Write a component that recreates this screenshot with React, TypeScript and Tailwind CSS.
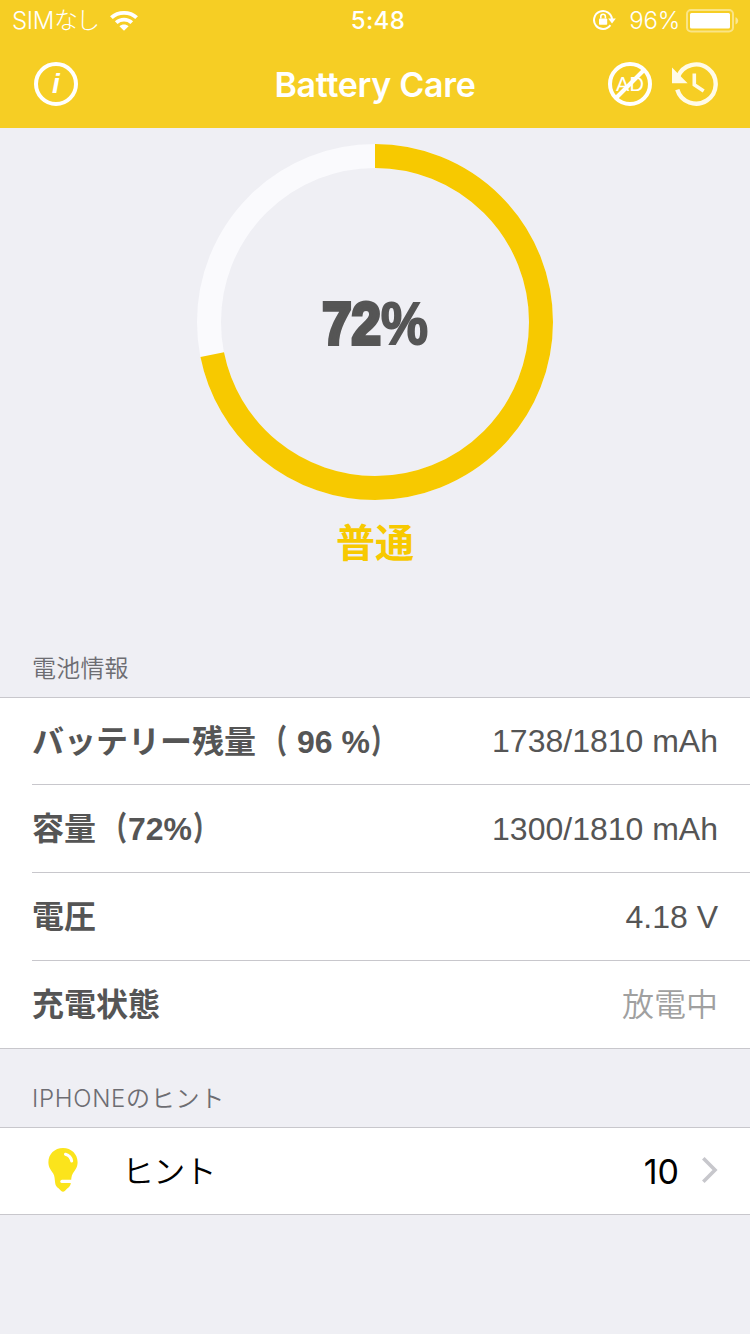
import React from 'react';

interface InfoRow {
  id: number;
  label: string;
  value: string;
  muted?: boolean;
}

const Ring: React.FC<{ level: number; full: number }> = ({ level, full }) => {
  const radius = 166;
  const length = 2 * Math.PI * radius;
  const ratio = level / full;

  return (
    <div className="relative w-[356px] h-[356px]">
      <svg viewBox="0 0 356 356" className="w-full h-full -rotate-90" fill="none" strokeWidth="24">
        <circle cx="178" cy="178" r={radius} stroke="#fafafd" />
        <circle cx="178" cy="178" r={radius} stroke="#f7c900" strokeDasharray={`${length * ratio} ${length}`} />
      </svg>
      <div className="absolute inset-0 pt-1 flex items-center justify-center">
        <span className="text-[60px] leading-none font-bold text-[#555] scale-x-[0.88] [-webkit-text-stroke:2px_#555] font-['Liberation_Sans',sans-serif]">
          <span className="[-webkit-text-stroke:4px_#555]">{Math.round(ratio * 100)}</span>%
        </span>
      </div>
    </div>
  );
};

// Full-width brackets are drawn narrower than the font has them
const Label: React.FC<{ text: string }> = ({ text }) => (
  <span className="font-bold whitespace-pre pt-px">
    {text.split(/([（）])/).map((part, index) => {
      if (part === '（') {
        return (
          <span key={index} className="inline-block w-8 -translate-x-[2px] scale-x-[0.65] origin-right [-webkit-text-stroke:1.2px_#555]">
            {part}
          </span>
        );
      }
      if (part === '）') {
        return (
          <span key={index} className="inline-block w-8 translate-x-[2px] scale-x-[0.65] origin-left [-webkit-text-stroke:1.2px_#555]">
            {part}
          </span>
        );
      }
      return <span key={index}>{part}</span>;
    })}
  </span>
);

const StatusBar: React.FC = () => (
  <div className="h-10 px-3 pt-px grid grid-cols-3 items-center text-white text-[24px] leading-[39px]">
    <div className="flex items-center">
      <span className="font-light tracking-[-0.4px]">SIM</span>
      <span className="font-light tracking-[-1.8px]">なし</span>
      <svg width="30" height="22" viewBox="0 0 30 22" fill="none" stroke="#fff" strokeWidth="3.9" className="ml-[11px]">
        <path d="M2.4 7.7C9.2 1.2 20.8 1.2 27.6 7.7" />
        <path d="M7.2 12.6C11.6 8.6 18.4 8.6 22.8 12.6" />
        <path d="M15 20.8l-4.6-4.6c2.6-2.3 6.6-2.3 9.2 0z" fill="#fff" stroke="none" />
      </svg>
    </div>
    <div className="pl-[6px] text-center font-medium tracking-[0.4px]">5:48</div>
    <div className="flex items-center justify-end -mr-px">
      <svg width="23" height="22" viewBox="0 0 23 22" fill="none" stroke="#fff" strokeWidth="2" className="mr-[13px] mb-px">
        <path d="M17.4 16.2A9 9 0 1 1 19 10.2" />
        <path d="M15.2 9.6h7.6L19 14.4z" fill="#fff" stroke="none" />
        <rect x="6" y="9.4" width="8.2" height="6.4" rx="0.8" fill="#fff" stroke="none" />
        <path d="M7.8 9.6V7.500a2.300 2.300 0 0 1 4.600 0v2.100" strokeWidth="1.6" />
      </svg>
      <span className="font-light tracking-[-0.2px] mr-[6px]">96%</span>
      <svg width="53" height="24" viewBox="0 0 53 24" fill="none">
        <rect x="1" y="1" width="46" height="21.5" rx="4" stroke="#fff" strokeOpacity="0.45" strokeWidth="2" />
        <rect x="4" y="4" width="40" height="15.5" rx="1.5" fill="#fff" />
        <path d="M49.5 8.2c3.6 1.2 3.6 6 0 7.2z" fill="#fff" fillOpacity="0.5" />
      </svg>
    </div>
  </div>
);

const NavBar: React.FC = () => (
  <div className="h-[88px] pl-[34px] pr-8 grid grid-cols-[110px_1fr_110px] items-center text-white">
    <div className="w-11 h-11 rounded-full border-4 border-white flex items-center justify-center">
      <span className="text-[28px] leading-none font-bold italic font-['Liberation_Sans',sans-serif]">i</span>
    </div>
    <h1 className="pt-[2px] pr-[2px] text-center text-[34px] leading-none font-semibold tracking-[-0.3px]">Battery Care</h1>
    <div className="flex items-center justify-end gap-5">
      <div className="relative w-11 h-11 shrink-0 rounded-full border-4 border-white flex items-center justify-center">
        <span className="text-[20px] leading-none font-['Liberation_Sans',sans-serif]">AD</span>
        <svg viewBox="0 0 44 44" className="absolute -inset-1 w-11 h-11" stroke="#fff" strokeWidth="4">
          <path d="M7.5 36.5l29-29" />
        </svg>
      </div>
      <svg width="46" height="44" viewBox="0 0 46 44" fill="none" stroke="#fffbe8" strokeWidth="4.4" className="shrink-0">
        <path d="M5.3 27.6A19.600 19.600 0 1 0 5.900 14.800" />
        <path d="M0 5.600v15.600h15.600z" fill="#fffbe8" stroke="none" />
        <path d="M22.300 11.600v11.200l9.400 6.200" strokeWidth="3.600" />
      </svg>
    </div>
  </div>
);

const App: React.FC = () => {
  const rows: InfoRow[] = [
    { id: 1, label: 'バッテリー残量（ 96 %）', value: '1738/1810 mAh' },
    { id: 2, label: '容量（72%）', value: '1300/1810 mAh' },
    { id: 3, label: '電圧', value: '4.18 V' },
    { id: 4, label: '充電状態', value: '放電中', muted: true }
  ];

  return (
    <div className="w-[750px] h-[1334px] overflow-hidden bg-[#efeff4] font-[Inter,'Noto_Sans_CJK_JP',sans-serif]">
      <header className="bg-[#f6ce24]">
        <StatusBar />
        <NavBar />
      </header>

      <section className="h-[510px] pt-4 flex flex-col items-center">
        <Ring level={1300} full={1810} />
        <p className="mt-[15px] text-[39px] leading-[56px] font-bold text-[#f7c900]">普通</p>
      </section>

      <h2 className="h-[59px] pl-8 text-[24px] leading-[61px] font-[350] tracking-[0.2px] text-[#6d6d72]">電池情報</h2>

      <ul className="bg-white border-y border-[#c8c7cc] pl-8 font-['Liberation_Sans','Noto_Sans_CJK_JP',sans-serif] text-[32px] text-[#555]">
        {rows.map((row) => (
          <li
            key={row.id}
            className="h-[88px] first:h-[87px] last:h-[87px] pr-8 flex items-center justify-between border-b last:border-b-0 border-[#c8c7cc] leading-none"
          >
            <Label text={row.label} />
            <span className={row.muted ? 'font-[350] text-[#a0a0a0]' : ''}>{row.value}</span>
          </li>
        ))}
      </ul>

      <h2 className="h-[78px] pl-8 pt-[11px] text-[24px] leading-[78px] font-[350] tracking-[0.7px] text-[#6d6d72]">IPHONEのヒント</h2>

      <div className="h-[88px] bg-white border-y border-[#c8c7cc] pl-12 pr-8 flex items-center text-black">
        <svg width="30" height="44" viewBox="0 0 30 44" className="mb-[2px]">
          <path
            d="M15 0C6.600 0 .4 6.200 .4 14.200c0 5.200 2.600 8 4.800 11.200 1.600 2.400 1.400 5.600 2 9.800.4 2.400 1.600 3.800 3.600 5.200l2.400 2.600c1 1 2.600 1 3.600 0l2.400-2.600c2-1.400 3.200-2.800 3.600-5.200.6-4.200.4-7.400 2-9.800 2.200-3.200 4.800-6 4.800-11.200C29.600 6.200 23.400 0 15 0z"
            fill="#fbe41c"
          />
          <path d="M17.500 6.200q5.400 1.600 6.200 6.800" stroke="#fff" strokeWidth="3" strokeLinecap="round" fill="none" />
          <path d="M14 33.400h9" stroke="#fff" strokeWidth="3.400" strokeLinecap="round" />
        </svg>
        <span className="ml-[44px] pt-[2px] text-[32px] font-[350] tracking-[-0.8px]">ヒント</span>
        <span className="ml-auto text-[34px]">10</span>
        <svg width="16" height="26" viewBox="0 0 16 26" fill="none" stroke="#c7c7cc" strokeWidth="3.600" className="ml-[23px] mb-[2px]">
          <path d="M1.300 1.300L13 13 1.300 24.700" />
        </svg>
      </div>
    </div>
  );
};

export default App;
